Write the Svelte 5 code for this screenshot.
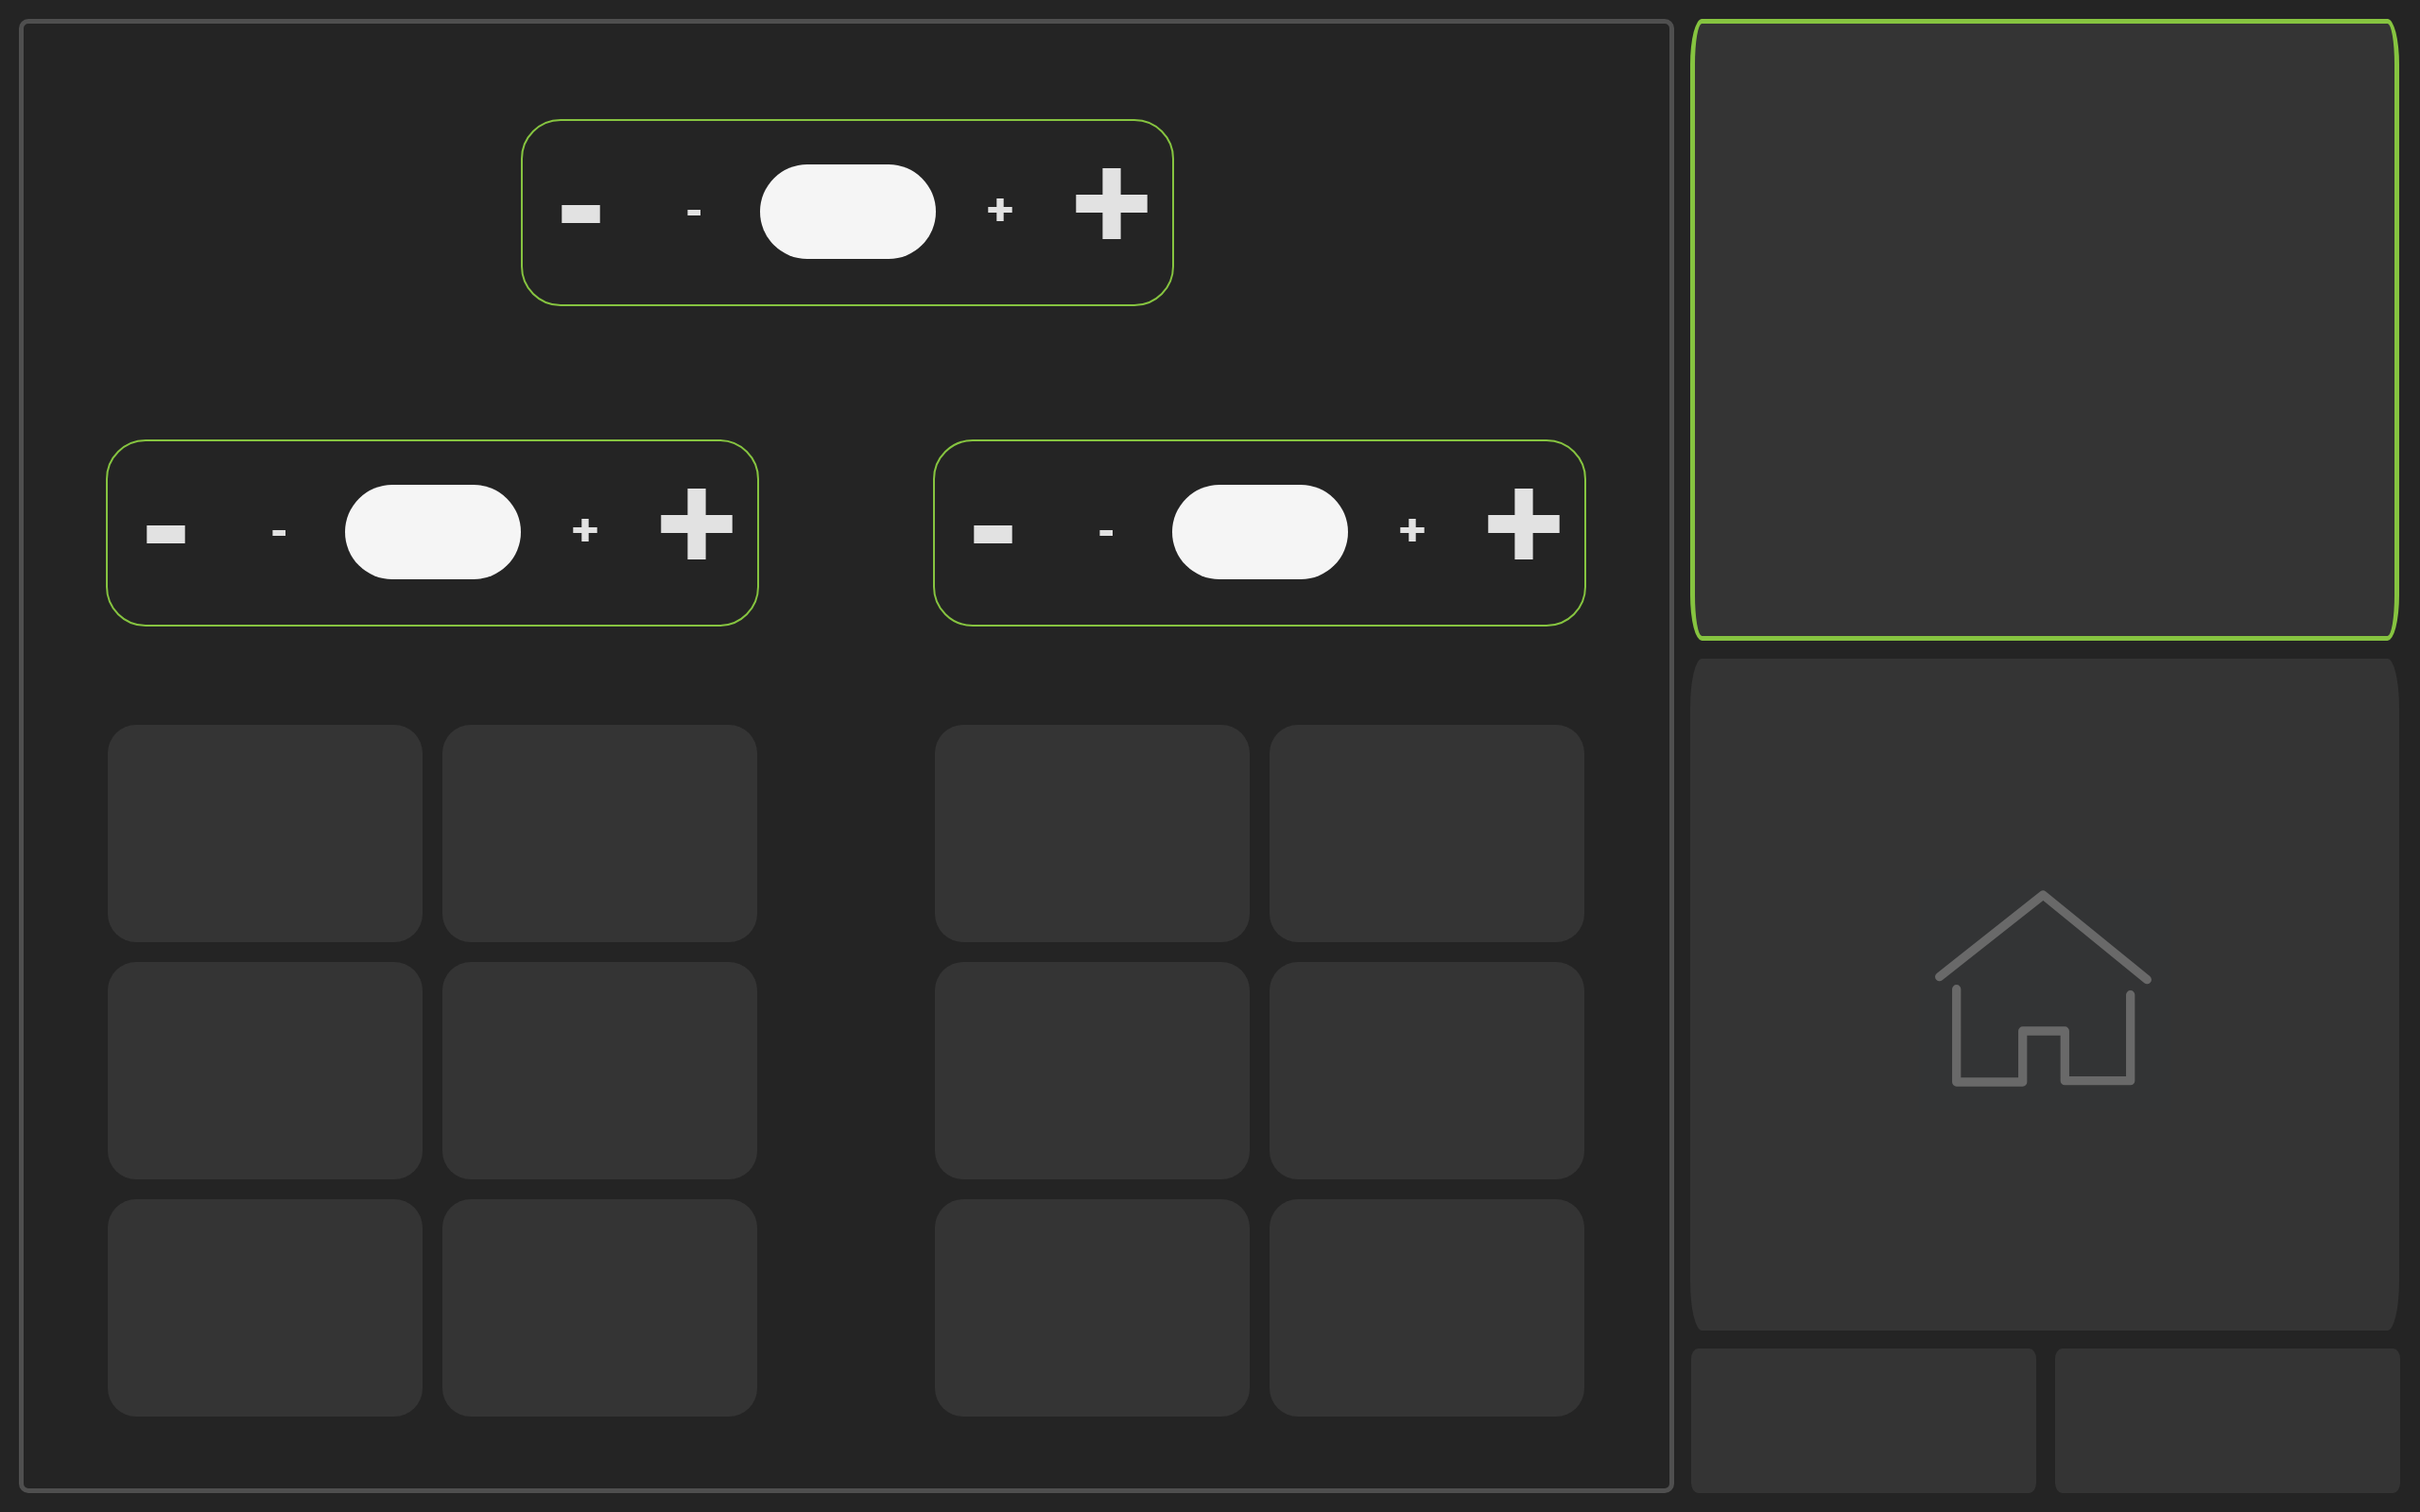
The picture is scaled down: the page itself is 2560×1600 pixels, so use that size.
<script>
  const groups = [0, 1];
  const tiles = [0, 1, 2, 3, 4, 5];
</script>

{#snippet stepper()}
  <div class="stepper">
    <svg viewBox="0 0 123 194" width="123" height="194" role="img" aria-label="Decrease a lot">
      <rect x="41.3" y="89" width="40.4" height="19" />
    </svg>
    <svg viewBox="0 0 128 194" width="128" height="194" role="img" aria-label="Decrease">
      <rect x="51.4" y="94" width="13.6" height="6" />
    </svg>
    <div class="value"></div>
    <svg viewBox="0 0 136 194" width="136" height="194" role="img" aria-label="Increase">
      <path d="M64.3 82h7.4v9h9v6h-9v9h-7.4v-9h-9v-6h9z" />
    </svg>
    <svg viewBox="0 0 114 194" width="114" height="194" role="img" aria-label="Increase a lot">
      <path d="M40.4 50h19.2v28h28.1v19H59.6v28H40.4V97H12.3V78h28.1z" />
    </svg>
  </div>
{/snippet}

<div class="screen">
  <main>
    <div class="top">{@render stepper()}</div>
    <div class="groups">
      {#each groups as g (g)}
        <section>
          {@render stepper()}
          <div class="tiles">
            {#each tiles as t (t)}
              <div class="tile"></div>
            {/each}
          </div>
        </section>
      {/each}
    </div>
  </main>
  <aside>
    <div class="panel large active"></div>
    <div class="panel large home">
      <div class="picture">
        <svg viewBox="0 0 240 220" width="240" height="220" role="img" aria-label="Home">
          <path d="M9.7 97.6 119.3 11 229.3 100.6" />
          <path d="M27.7 110.7V209H97.7V155H142.3V207.7H211.7V116.7" />
        </svg>
      </div>
    </div>
    <div class="pair">
      <div class="panel"></div>
      <div class="panel"></div>
    </div>
  </aside>
</div>

<style>
  :global(body) {
    margin: 0;
    background: #242424;
  }
  .screen {
    box-sizing: border-box;
    width: 2560px;
    height: 1600px;
    padding: 20px;
    display: flex;
    gap: 17.4px;
    background: #242424;
    font-family: "Liberation Sans", sans-serif;
  }
  main {
    box-sizing: border-box;
    width: 1751px;
    height: 1560px;
    flex: none;
    border: 5px solid #4f4f4f;
    border-radius: 10px;
    padding: 101px 87px 0;
  }
  .top {
    display: flex;
    padding-left: 439px;
    margin-bottom: 141px;
  }
  .stepper {
    box-sizing: border-box;
    width: 691px;
    height: 198px;
    border: 2px solid #86c440;
    border-radius: 42px;
    display: grid;
    grid-template-columns: 123px 128px 186px 136px 114px;
    align-items: center;
  }
  .stepper svg {
    display: block;
    fill: #e2e2e2;
  }
  .value {
    height: 100px;
    margin-bottom: 2px;
    border-radius: 50px;
    background: #f5f5f5;
  }
  .groups {
    display: flex;
    gap: 184px;
  }
  .tiles {
    display: grid;
    grid-template-columns: 333px 333px;
    grid-auto-rows: 230px;
    gap: 21px;
    padding: 104px 2px 0;
  }
  .tile {
    background: #343434;
    border-radius: 30px;
  }
  aside {
    width: 751px;
    flex: none;
    display: grid;
    grid-template-rows: 657.6px 711.4px 153px;
    row-gap: 19px;
  }
  .panel {
    box-sizing: border-box;
    background: #343434;
    border-radius: 2% / 7%;
  }
  .large {
    width: 749.4px;
    border-radius: 1.65% / 7.3%;
  }
  .active {
    border: 5px solid #86c440;
  }
  .home {
    display: grid;
    place-items: center;
  }
  .picture {
    width: 264px;
    height: 245px;
    padding-right: 3px;
    display: flex;
    justify-content: center;
    background: #333435;
  }
  .picture svg {
    display: block;
    margin-top: 6px;
    fill: none;
    stroke: #696969;
    stroke-width: 9.3;
    stroke-linecap: round;
    stroke-linejoin: round;
  }
  .pair {
    display: grid;
    grid-template-columns: 1fr 1fr;
    column-gap: 19.6px;
    padding-left: 0.6px;
  }
</style>
